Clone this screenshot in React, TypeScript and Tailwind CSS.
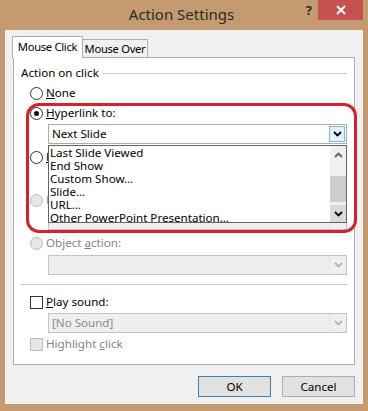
import React from "react";

const font = "font-['Noto_Sans','Liberation_Sans',sans-serif]";

function Chevron({ up = false, color = "#000" }: { up?: boolean; color?: string }) {
  return (
    <svg width="9" height="6" viewBox="0 0 9 6" className={up ? "rotate-180" : ""}>
      <path d="M1 1 L4.5 4.5 L8 1" fill="none" stroke={color} strokeWidth="1.8" />
    </svg>
  );
}

function Radio({ checked = false, disabled = false }: { checked?: boolean; disabled?: boolean }) {
  return (
    <span
      className={`flex h-[13px] w-[13px] shrink-0 items-center justify-center rounded-full border ${
        disabled ? "border-[#bcbcbc] bg-[#e6e6e6]" : "border-[#333] bg-white"
      }`}
    >
      {checked && <span className="h-[5px] w-[5px] rounded-full bg-[#111]" />}
    </span>
  );
}

function Check({ disabled = false }: { disabled?: boolean }) {
  return (
    <span
      className={`h-[13px] w-[13px] shrink-0 border ${
        disabled ? "border-[#bcbcbc] bg-[#e6e6e6]" : "border-[#333] bg-white"
      }`}
    />
  );
}

function DisabledCombo({ text = "" }: { text?: string }) {
  return (
    <div className="ml-[34px] mr-[7px] flex h-[20px] items-center border border-[#bcc5d3] bg-[#efefef]">
      <span className="flex-1 pl-[3px] text-[#8a8a8a]">{text}</span>
      <span className="flex h-full w-[17px] items-center justify-center border-l border-[#e2e2e2]">
        <Chevron color="#b4b4b4" />
      </span>
    </div>
  );
}

const items = [
  "Last Slide Viewed",
  "End Show",
  "Custom Show…",
  "Slide…",
  "URL…",
  "Other PowerPoint Presentation…",
];

export default function App() {
  return (
    <div className={`flex h-[411px] w-[368px] flex-col bg-[#c49a70] text-[11.6px] leading-[16px] text-black ${font}`}>
      {/* title bar */}
      <div className="flex h-[30px] items-start">
        <div className="flex-1" />
        <div className="pt-[5px] text-[15px] leading-[18px] text-[#2b2b2b]">Action Settings</div>
        <div className="flex flex-1 justify-end pr-[5px]">
          <span className="mr-[6px] pt-[2px] text-[13px] font-bold leading-[16px] text-[#2b2b2b]">?</span>
          <span className="flex h-[20px] w-[45px] items-center justify-center bg-[#c75050]">
            <svg width="10" height="10" viewBox="0 0 10 10">
              <path d="M1 1 L9 9 M9 1 L1 9" stroke="#fff" strokeWidth="2" />
            </svg>
          </span>
        </div>
      </div>

      {/* client area */}
      <div className="mx-[5px] mb-[7px] flex flex-1 flex-col bg-[#f0f0f0]">
        {/* tabs */}
        <div className="relative z-10 flex items-end whitespace-nowrap pl-[7px] pt-[6px] text-[11.2px] tracking-[-0.3px]">
          <div className="-mb-px flex h-[22px] w-[71px] items-start justify-center border border-b-0 border-[#adadad] bg-white pt-[2px]">
            Mouse Click
          </div>
          <div className="flex h-[18px] w-[65px] items-center justify-center border border-b-0 border-l-0 border-[#adadad] bg-[#f0f0f0]">
            Mouse Over
          </div>
        </div>

        {/* panel */}
        <div className="relative mx-[8px] flex h-[308px] flex-col border border-[#adadad] bg-white pt-[7px]">
          <div className="flex h-[16px] items-center pl-[7px] pr-[7px]">
            <span>Action on click</span>
            <span className="ml-[4px] h-px flex-1 bg-[#c8c8c8]" />
          </div>

          <div className="mt-[2px] flex h-[20px] items-center gap-[3px] pl-[16px]">
            <Radio />
            <span>
              <span className="underline">N</span>one
            </span>
          </div>

          <div className="flex h-[20px] items-center gap-[3px] pl-[16px]">
            <Radio checked />
            <span>
              <span className="underline">H</span>yperlink to:
            </span>
          </div>

          {/* Next Slide combo with open list */}
          <div className="relative z-10 ml-[34px] mr-[7px] mt-px">
            <div className="flex h-[20px] items-center border border-[#ababab] bg-white">
              <span className="flex-1 pl-[3px]">Next Slide</span>
              <span className="mr-px flex h-[16px] w-[16px] items-center justify-center border border-[#7eb4ea] bg-[#e5f1fb]">
                <Chevron />
              </span>
            </div>
            <div className="absolute left-0 right-0 top-[21px] flex h-[78px] border border-[#646464] bg-white">
              <div className="flex-1 overflow-hidden pl-[1px]">
                {items.map((t) => (
                  <div key={t} className="h-[13px] whitespace-nowrap leading-[13px]">
                    {t}
                  </div>
                ))}
              </div>
              <div className="flex w-[16px] flex-col bg-[#f0f0f0]">
                <div className="flex h-[17px] items-center justify-center">
                  <Chevron up color="#606060" />
                </div>
                <div className="h-[13px]" />
                <div className="h-[26px] bg-[#cdcdcd]" />
                <div className="h-[3px]" />
                <div className="flex flex-1 items-center justify-center bg-[#dadada]">
                  <Chevron />
                </div>
              </div>
            </div>
          </div>

          {/* rows hidden behind the open list */}
          <div className="mt-[3px] flex h-[20px] items-center gap-[3px] overflow-hidden pl-[16px]">
            <Radio />
            <span className="whitespace-nowrap">
              <span className="underline">R</span>un program:
            </span>
          </div>
          <DisabledCombo />
          <div className="mt-[3px] flex h-[20px] items-center gap-[3px] overflow-hidden pl-[16px] text-[#838383]">
            <Radio disabled />
            <span className="whitespace-nowrap">
              R<span className="underline">u</span>n macro:
            </span>
          </div>
          <DisabledCombo />

          <div className="mt-[3px] flex h-[20px] items-center gap-[3px] pl-[16px] text-[#838383]">
            <Radio disabled />
            <span>
              Object <span className="underline">a</span>ction:
            </span>
          </div>
          <div className="mt-[2px]">
            <DisabledCombo />
          </div>

          <div className="ml-[7px] mr-[7px] mt-[9px] h-px bg-[#c8c8c8]" />

          <div className="mt-[7px] flex h-[20px] items-center gap-[3px] pl-[16px]">
            <Check />
            <span>
              <span className="underline">P</span>lay sound:
            </span>
          </div>
          <div className="mt-px">
            <DisabledCombo text="[No Sound]" />
          </div>
          <div className="mt-px flex h-[20px] items-center gap-[3px] pl-[16px] text-[#838383]">
            <Check disabled />
            <span>
              Highlight <span className="underline">c</span>lick
            </span>
          </div>

          {/* red annotation */}
          <div className="pointer-events-none absolute left-[12px] top-[45px] z-20 h-[130px] w-[331px] rounded-[13px] border-[3px] border-[#d7202a]" />
        </div>

        {/* buttons */}
        <div className="mt-[11px] flex justify-end gap-[11px] pr-[8px]">
          <button className="h-[21px] w-[73px] border border-[#3c7fb1] bg-[#e1e1e1] leading-[19px]">OK</button>
          <button className="h-[21px] w-[73px] border border-[#adadad] bg-[#e1e1e1] leading-[19px]">Cancel</button>
        </div>
      </div>
    </div>
  );
}
